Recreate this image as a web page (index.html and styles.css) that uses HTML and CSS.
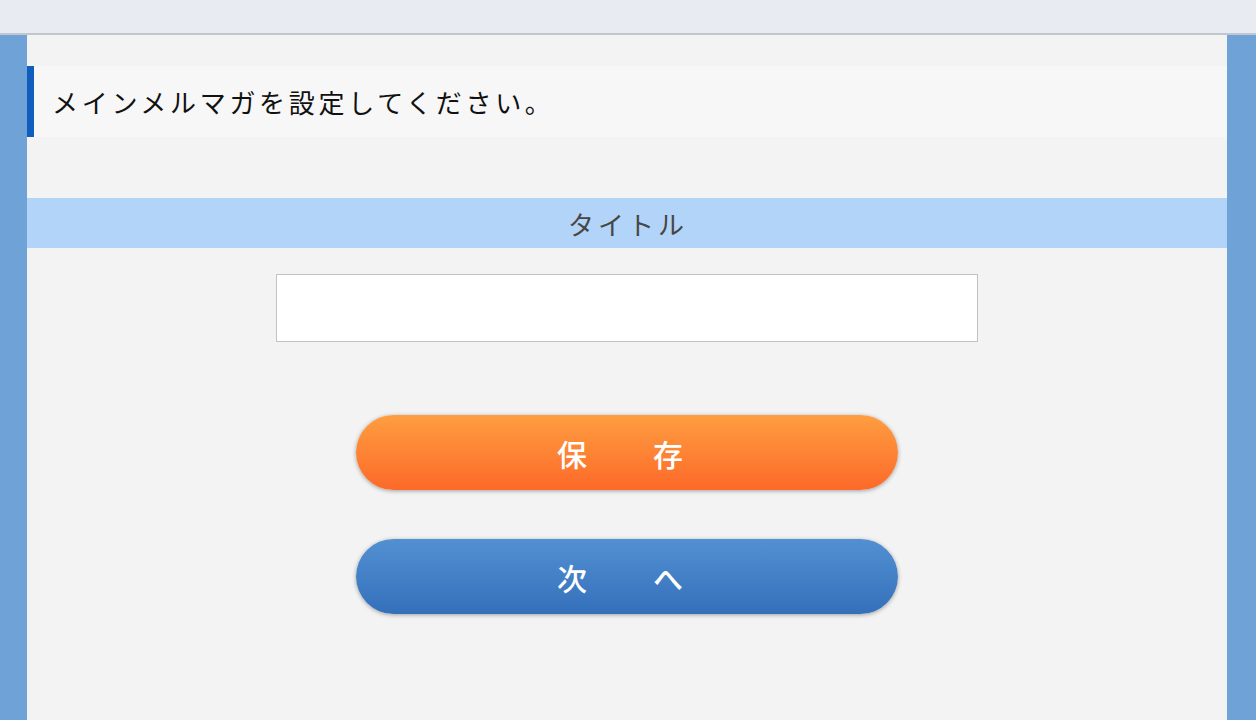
FILE: index.html
```html
<!DOCTYPE html>
<html lang="ja">
<head>
<meta charset="utf-8">
<title>メインメルマガ設定</title>
<link rel="stylesheet" href="styles.css">
</head>
<body>
<div class="topbar"></div>
<div class="page">
  <main class="panel">
    <h1 class="heading">メインメルマガを設定してください。</h1>
    <div class="band">タイトル</div>
    <div class="field-row">
      <input class="text-input" type="text">
    </div>
    <div class="actions">
      <button class="btn btn-save">保　　存</button>
      <button class="btn btn-next">次　　へ</button>
    </div>
  </main>
</div>
</body>
</html>
```

FILE: styles.css
```css
* { box-sizing: border-box; }
html, body { margin: 0; padding: 0; }
body {
  height: 720px;
  overflow: hidden;
  background: #6fa3d8;
  font-family: "Noto Sans CJK JP", "Noto Sans", sans-serif;
}
.topbar {
  height: 35px;
  background: #e8ebf2;
  border-bottom: 2px solid #c3c6cd;
}
.page {
  height: 685px;
  padding-left: 27px;
}
.panel {
  width: 1200px;
  height: 100%;
  background: #f3f3f3;
  padding-top: 31px;
}
.heading {
  margin: 0;
  height: 71px;
  display: flex;
  align-items: center;
  background: #f7f7f7;
  border-left: 7px solid #0f5ebd;
  padding-left: 18px;
  font-size: 26px;
  font-weight: 400;
  letter-spacing: 3.7px;
  color: #111;
}
.band {
  margin-top: 61px;
  height: 50px;
  background: #b3d4f9;
  color: #464646;
  font-size: 26px;
  font-weight: 400;
  letter-spacing: 4px;
  padding-left: 2px;
  display: flex;
  align-items: center;
  justify-content: center;
}
.field-row {
  display: flex;
  justify-content: center;
  margin-top: 26px;
}
.text-input {
  width: 702px;
  height: 68px;
  border: 1px solid #c2c2c2;
  background: #fff;
  margin: 0;
  outline: none;
}
.actions {
  margin-top: 73px;
  display: flex;
  flex-direction: column;
  align-items: center;
  gap: 49px;
}
.btn {
  width: 542px;
  height: 75px;
  border: none;
  border-radius: 38px;
  color: #fff;
  font-family: "Noto Sans CJK JP", "Noto Sans", sans-serif;
  font-size: 30px;
  font-weight: 500;
  letter-spacing: 2px;
  padding: 0 12px 0 0;
  box-shadow: 0 1px 4px rgba(0, 0, 0, 0.35);
}
.btn-save {
  background: linear-gradient(#fe9e41, #fd6929);
}
.btn-next {
  background: linear-gradient(#5290d2, #3470ba);
}
```
